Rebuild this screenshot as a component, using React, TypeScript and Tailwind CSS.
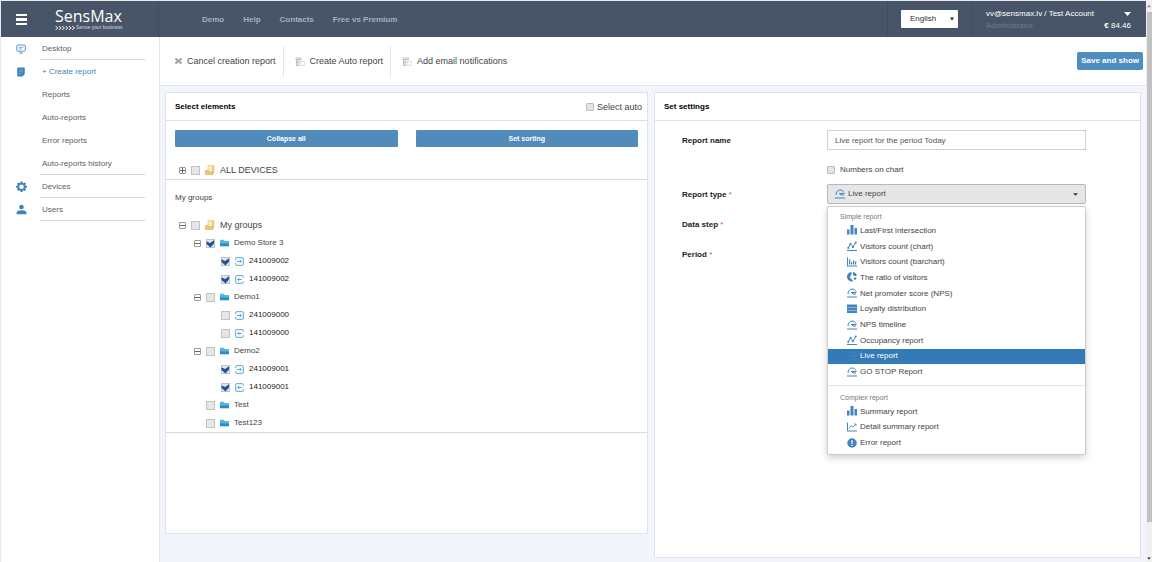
import React, { useState } from "react";

type IconProps = { className?: string };

const MonitorIcon = () => (
  <svg viewBox="0 0 20 20" className="size-[10px] text-[#5a9bd0]" fill="none" stroke="currentColor" strokeWidth="2">
    <rect x="1.5" y="2" width="17" height="12.5" rx="2" />
    <path d="M5 6.5h10M5 10h7M6 18.5h8M10 14.5v4" strokeWidth="1.6" />
  </svg>
);

const ReportIcon = () => (
  <svg viewBox="0 0 20 20" className="size-[10px] text-[#3f82bd]">
    <path d="M4 1h12a1.5 1.5 0 0 1 1.5 1.5V14l-4.5 5H4A1.5 1.5 0 0 1 2.500 17.500v-15A1.5 1.5 0 0 1 4 1z" fill="currentColor" />
    <path d="M6 6h8M6 9.500h8M6 13h5" stroke="#8dbbe0" strokeWidth="1.300" />
  </svg>
);

const GearIcon = () => (
  <svg viewBox="0 0 24 24" className="size-[11px] text-[#3f82bd]">
    <path
      fill="currentColor"
      fillRule="evenodd"
      d="M10 1h4l.6 3 1.900.8L19 3.100 21.900 6l-1.700 2.500.8 1.900 3 .6v3l-3 .6-.8 1.900 1.700 2.500-2.900 2.900-2.500-1.700-1.900.8-.6 3h-4l-.6-3-1.900-.8L5 21.900 2.100 19l1.700-2.500-.8-1.900-3-.6v-3l3-.6.8-1.900L2.100 6 5 3.100l2.500 1.700 1.900-.8zM12 7.500a5 5 0 1 0 0 10 5 5 0 0 0 0-10z"
    />
  </svg>
);

const UserIcon = () => (
  <svg viewBox="0 0 20 20" className="size-[11px] text-[#3f82bd]" fill="currentColor">
    <circle cx="10" cy="5.500" r="4.200" />
    <path d="M1 18.500v-2.500c0-3 4-4.500 9-4.500s9 1.500 9 4.500v2.500z" />
  </svg>
);

const BarsIcon = ({ className = "" }: IconProps) => (
  <svg viewBox="0 0 20 20" className={className} fill="currentColor">
    <path d="M0 9h5v10H0zM7 0h6v19H7zM15 6h5v13h-5z" />
  </svg>
);

const LineIcon = ({ className = "" }: IconProps) => (
  <svg viewBox="0 0 20 20" className={className} fill="none" stroke="currentColor" strokeWidth="2">
    <path d="M0 19h20" />
    <path d="M2 14 7 5.500l5 7L18 2" />
    <g fill="currentColor" stroke="none">
      <circle cx="2.500" cy="14" r="2" />
      <circle cx="7" cy="5.500" r="2" />
      <circle cx="12" cy="12.500" r="2" />
      <circle cx="17.500" cy="3" r="2" />
    </g>
  </svg>
);

const BarChartIcon = ({ className = "" }: IconProps) => (
  <svg viewBox="0 0 20 20" className={className} fill="currentColor">
    <path d="M0 1h2v16h18v2H0zM4 5h2.500v10H4zM8 10h2.500v5H8zM12 7h2.500v8H12zM16 9h2.500v6H16z" />
  </svg>
);

const DonutIcon = ({ className = "" }: IconProps) => (
  <svg viewBox="0 0 20 20" className={className} fill="currentColor">
    <path d="M9 0v6a4.200 4.200 0 0 0 0 8l3.500 4.500A9.500 9.500 0 1 1 9 0z" />
    <path d="M12 0a9 9 0 0 1 7.500 8h-5A4.500 4.500 0 0 0 12 6z" />
    <path d="M19 11a9 9 0 0 1-3 5.500L13 13l1.500-2z" />
  </svg>
);

const GaugeIcon = ({ className = "" }: IconProps) => (
  <svg viewBox="0 0 20 20" className={className} fill="none" stroke="currentColor" strokeWidth="2">
    <path d="M2 12C2 6 5.500 2 10 2c3.500 0 6.500 1.500 8 5M8 9h11M9 9l3 3h6M0 18h20" />
  </svg>
);

const ListIcon = ({ className = "" }: IconProps) => (
  <svg viewBox="0 0 20 20" className={className} fill="currentColor">
    <path d="M0 1h20v17H0z" />
    <path d="M1 7h18M1 13h18" stroke="#9fc3e2" strokeWidth="1.600" />
  </svg>
);

const AxisIcon = ({ className = "" }: IconProps) => (
  <svg viewBox="0 0 20 20" className={className} fill="none" stroke="currentColor" strokeWidth="2">
    <path d="M1 1v17h19" />
    <path d="M4.500 13 8 7l4 3 6-6M14 4h4v4" strokeWidth="1.600" />
  </svg>
);

const AlertIcon = ({ className = "" }: IconProps) => (
  <svg viewBox="0 0 20 20" className={className}>
    <circle cx="10" cy="10" r="9.500" fill="currentColor" />
    <path d="M10 4v7.500M10 13.500v2.500" stroke="#ffffff" strokeWidth="2.400" />
  </svg>
);

const GroupFolderIcon = () => (
  <svg viewBox="0 0 20 20" className="size-[10px] shrink-0">
    <path d="M6 1h12v15l-3 2H6z" fill="#f8ebbf" stroke="#dcbc70" />
    <path d="M14 1h4v15l-4 2z" fill="#eccb74" />
    <path d="M1 11h5l3 3h6v5H1z" fill="#edc96f" stroke="#c9a045" />
  </svg>
);

const FolderIcon = () => (
  <svg viewBox="0 0 20 16" className="h-[8px] w-[9px] shrink-0">
    <path d="M0 1h8l2 2.500h10V15H0z" fill="#55b6e2" />
    <path d="M0 9h20v6H0z" fill="#2a8dc4" />
  </svg>
);

const DoorIcon = ({ out }: { out: boolean }) => (
  <svg viewBox="0 0 20 20" className="size-[9px] shrink-0 text-[#3a96cc]" fill="none" stroke="currentColor" strokeWidth="1.900">
    {out ? (
      <path d="M18.500 6V3.500a2 2 0 0 0-2-2h-13a2 2 0 0 0-2 2v13a2 2 0 0 0 2 2h13a2 2 0 0 0 2-2V14M15 10H6M9.500 6.500 6 10l3.500 3.500" />
    ) : (
      <path d="M1.500 7V3.500a2 2 0 0 1 2-2h13a2 2 0 0 1 2 2v13a2 2 0 0 1-2 2h-13a2 2 0 0 1-2-2V13M4 10h10M10.500 6.500 14 10l-3.500 3.500" />
    )}
  </svg>
);

const DocIcon = () => (
  <svg viewBox="0 0 20 18" className="h-[9px] w-[10px] shrink-0" fill="none" stroke="#b0b0b0" strokeWidth="1.600">
    <path d="M1 2h13M1 5h13M4 8h6M4 11h5M4 14h5M3 5v12h6" />
    <rect x="11.500" y="9" width="7" height="7.500" stroke="#d4d4d4" />
  </svg>
);

function Check({
  checked = false,
  label,
  id,
  size = "large",
}: {
  checked?: boolean;
  label?: string;
  id?: string;
  size?: "large" | "small";
}) {
  const [on, setOn] = useState(checked);
  return (
    <span className="grid shrink-0 place-items-center">
      <input
        id={id}
        type="checkbox"
        aria-label={label}
        checked={on}
        onChange={() => setOn(!on)}
        className={
          size === "large"
            ? "col-start-1 row-start-1 size-[9px] appearance-none border border-[#c2c2c2] bg-[#e6e6e6]"
            : "col-start-1 row-start-1 size-[8px] appearance-none rounded-[1px] border border-[#bdbdbd] bg-[#e4e4e4]"
        }
      />
      {on && (
        <svg viewBox="0 0 18 18" className="pointer-events-none col-start-1 row-start-1 size-[9px]">
          <path d="M1 4.500 8 8l8-5.500V9l-7 8L1 10z" fill="#1c54a0" />
        </svg>
      )}
    </span>
  );
}

function Toggle({ open }: { open: boolean }) {
  return (
    <button
      type="button"
      aria-label={open ? "Collapse" : "Expand"}
      className="grid size-[7px] shrink-0 place-items-center rounded-[1px] border border-[#9a9a9a]"
    >
      <svg viewBox="0 0 5 5" className="size-[5px]" stroke="#666666" strokeWidth="1">
        <path d={open ? "M0 2.500h5" : "M0 2.500h5M2.500 0v5"} />
      </svg>
    </button>
  );
}

const navItems = [
  { text: "Desktop", icon: <MonitorIcon />, line: true },
  { text: "+ Create report", icon: <ReportIcon />, line: false, active: true },
  { text: "Reports", line: false },
  { text: "Auto-reports", line: false },
  { text: "Error reports", line: false },
  { text: "Auto-reports history", line: true },
  { text: "Devices", icon: <GearIcon />, line: true },
  { text: "Users", icon: <UserIcon />, line: true },
];

const groups = [
  { name: "Demo Store 3", checked: true, devices: ["241009002", "141009002"] },
  { name: "Demo1", checked: false, devices: ["241009000", "141009000"] },
  { name: "Demo2", checked: false, devices: ["241009001", "141009001"] },
  { name: "Test", checked: false, devices: [] },
  { name: "Test123", checked: false, devices: [] },
];

const simpleReports = [
  { text: "Last/First intersection", Icon: BarsIcon },
  { text: "Visitors count (chart)", Icon: LineIcon },
  { text: "Visitors count (barchart)", Icon: BarChartIcon },
  { text: "The ratio of visitors", Icon: DonutIcon },
  { text: "Net promoter score (NPS)", Icon: GaugeIcon },
  { text: "Loyalty distribution", Icon: ListIcon },
  { text: "NPS timeline", Icon: GaugeIcon },
  { text: "Occupancy report", Icon: LineIcon },
  { text: "Live report", Icon: GaugeIcon, selected: true },
  { text: "GO STOP Report", Icon: GaugeIcon },
];

const complexReports = [
  { text: "Summary report", Icon: BarsIcon },
  { text: "Detail summary report", Icon: AxisIcon },
  { text: "Error report", Icon: AlertIcon },
];

type Report = { text: string; Icon: (p: IconProps) => React.ReactElement; selected?: boolean };

function ReportOption({ text, Icon, selected }: Report) {
  return (
    <button
      type="button"
      role="option"
      aria-selected={!!selected}
      className={
        selected
          ? "flex items-center gap-[3px] bg-[#337ab7] pl-[19px] text-left text-white"
          : "flex items-center gap-[3px] pl-[19px] text-left text-[#444444]"
      }
    >
      <Icon className={selected ? "mb-px size-[10px] text-[#4384bd]" : "mb-px size-[10px] text-[#4585be]"} />
      {text}
    </button>
  );
}

function FieldLabel({ text, htmlFor, required }: { text: string; htmlFor: string; required?: boolean }) {
  return (
    <label htmlFor={htmlFor} className="pt-px font-bold text-[#222222]">
      {text}
      {required && <span className="font-normal text-[#e05050]"> *</span>}
    </label>
  );
}

function Header() {
  return (
    <header className="flex h-[36px] items-stretch bg-[#485568] text-white">
      <div className="flex w-[158px] shrink-0 items-center border-r border-[#414d5f] pl-[15px]">
        <button type="button" aria-label="Menu" className="flex w-[11px] flex-col gap-[2px]">
          <span className="h-[2px] bg-white" />
          <span className="h-[3px] bg-white" />
          <span className="h-[2px] bg-white" />
        </button>
        <a href="#" className="ml-[28px] flex flex-col">
          <span className="font-['Open_Sans','Noto_Sans',sans-serif] text-[16px] leading-[16px] font-medium">SensMax</span>
          <span className="flex items-center gap-px pt-px">
            <svg viewBox="0 0 42 8" className="h-[4px] w-[20px]" fill="none" stroke="white" strokeWidth="2">
              <path d="M1 0l5 4-5 4M8 0l5 4-5 4M15 0l5 4-5 4M22 0l5 4-5 4M29 0l5 4-5 4M36 0l5 4-5 4" />
            </svg>
            <span className="text-[5px] leading-[5px] text-[#d5dae1]">Sense your business</span>
          </span>
        </a>
      </div>
      <nav className="flex flex-1 items-center gap-[19px] pt-px pl-[43px] font-bold text-[#a5afbc]">
        <a href="#">Demo</a>
        <a href="#">Help</a>
        <a href="#">Contacts</a>
        <a href="#">Free vs Premium</a>
      </nav>
      <div className="flex items-center border-x border-[#414d5f] px-[13px]">
        <div className="grid items-center">
          <select
            aria-label="Language"
            className="col-start-1 row-start-1 h-[18px] w-[57px] appearance-none rounded-[1px] bg-white pl-[9px] text-[#333333]"
          >
            <option>English</option>
          </select>
          <svg viewBox="0 0 10 8" className="pointer-events-none col-start-1 row-start-1 mr-[4px] h-[4px] w-[4px] justify-self-end">
            <path d="M0 0h10L5 8z" fill="#222222" />
          </svg>
        </div>
      </div>
      <div className="flex w-[174px] flex-col justify-center gap-[2px] pt-px pr-[15px] pl-[14px] leading-[10px]">
        <div className="flex items-center justify-between">
          <span>vv@sensmax.lv / Test Account</span>
          <svg viewBox="0 0 12 7" className="h-[4px] w-[7px]">
            <path d="M0 0h12L6 7z" fill="white" />
          </svg>
        </div>
        <div className="flex justify-between">
          <span className="text-[#6c798b]">Administrator</span>
          <span>
            <b>€</b> 84.46
          </span>
        </div>
      </div>
    </header>
  );
}

export default function App() {
  return (
    <div className="flex min-h-screen bg-[#f0f0f0] font-['Liberation_Sans',Arial,sans-serif] text-[8px] leading-[12px] text-[#444444]">
      <div className="flex min-w-0 flex-1 flex-col border-t border-l border-[#e6ebf0] bg-[#f2f5fb]">
        <Header />
        <div className="flex flex-1">
          <aside className="w-[159px] shrink-0 border-r border-[#e3e6ec] bg-white">
            <nav className="flex flex-col">
              {navItems.map((item) => (
                <a key={item.text} href="#" className="flex h-[23px] pl-[15px]">
                  <span className="flex w-[24px] items-center">{item.icon}</span>
                  <span
                    className={
                      item.line
                        ? "mr-[14px] flex flex-1 items-center border-b border-[#d2d5d9] pt-px pl-[2px] text-[#606060]"
                        : item.active
                          ? "flex flex-1 items-center pl-[2px] text-[#4585b5]"
                          : "flex flex-1 items-center pl-[2px] text-[#606060]"
                    }
                  >
                    {item.text}
                  </span>
                </a>
              ))}
            </nav>
          </aside>

          <main className="flex min-w-0 flex-1 flex-col">
            <div className="flex h-[49px] items-center border-b border-[#dfe4ec] bg-white pr-[3px] pl-[15px] text-[9px]">
              <button type="button" className="flex h-[31px] items-center gap-[5px] border-r border-[#e4e4e4] pr-[7px]">
                <svg viewBox="0 0 14 12" className="h-[6px] w-[7px]" stroke="#a3a3a3" strokeWidth="4">
                  <path d="M1 1l12 10M13 1 1 11" />
                </svg>
                Cancel creation report
              </button>
              <button type="button" className="flex h-[31px] items-center gap-[5px] border-r border-[#e4e4e4] pr-[7px] pl-[11px]">
                <DocIcon />
                Create Auto report
              </button>
              <button type="button" className="flex h-[31px] items-center gap-[5px] pl-[11px]">
                <DocIcon />
                Add email notifications
              </button>
              <button type="button" className="ml-auto h-[18px] rounded-[2px] bg-[#4f8dbf] px-[4px] text-[8px] font-bold text-white">
                Save and show
              </button>
            </div>

            <div className="grid flex-1 grid-cols-[483fr_487fr] items-start gap-[6px] px-[5px] pt-[6px] pb-[3px]">
              <section className="min-h-[442px] min-w-0 border border-[#dde2ec] bg-white">
                <div className="flex h-[28px] items-center justify-between border-b border-[#dadfe8] pr-[5px] pl-[9px]">
                  <h2 className="font-bold text-black">Select elements</h2>
                  <span className="flex items-center gap-[3px] text-[9px]">
                    <Check id="auto" size="small" />
                    <label htmlFor="auto">Select auto</label>
                  </span>
                </div>
                <div className="grid grid-cols-2 gap-[18px] px-[9px] pt-[9px]">
                  <button type="button" className="h-[17px] rounded-[1px] bg-[#508bbb] text-[7px] font-bold text-white">
                    Collapse all
                  </button>
                  <button type="button" className="h-[17px] rounded-[1px] bg-[#508bbb] text-[7px] font-bold text-white">
                    Set sorting
                  </button>
                </div>
                <div className="mt-[14px] flex h-[19px] items-center gap-[5px] border-b border-[#d5dae2] pl-[13px] text-[9px]">
                  <Toggle open={false} />
                  <Check label="All devices" />
                  <GroupFolderIcon />
                  ALL DEVICES
                </div>
                <h3 className="pt-[12px] pl-[9px]">My groups</h3>
                <ul className="mt-[12px] border-b border-[#d5dae2]">
                  <li className="flex h-[18px] items-center gap-[5px] pl-[13px] text-[9px]">
                    <Toggle open />
                    <Check label="My groups" />
                    <GroupFolderIcon />
                    My groups
                  </li>
                  {groups.map((group) => (
                    <li key={group.name}>
                      <div
                        className={
                          group.devices.length
                            ? "flex h-[18px] items-center gap-[5px] pl-[28px]"
                            : "flex h-[18px] items-center gap-[5px] pl-[40px]"
                        }
                      >
                        {group.devices.length > 0 && <Toggle open />}
                        <span className="flex items-center gap-[5px]">
                          <Check checked={group.checked} label={group.name} />
                          <FolderIcon />
                          {group.name}
                        </span>
                      </div>
                      <ul>
                        {group.devices.map((device) => (
                          <li key={device} className="flex h-[18px] items-center gap-[5px] pl-[55px] text-[#222222]">
                            <Check checked={group.name !== "Demo1"} label={device} />
                            <DoorIcon out={device.startsWith("1")} />
                            {device}
                          </li>
                        ))}
                      </ul>
                    </li>
                  ))}
                </ul>
              </section>

              <section className="min-h-[466px] min-w-0 border border-[#dde2ec] bg-white">
                <div className="flex h-[28px] items-center border-b border-[#dadfe8] pl-[9px]">
                  <h2 className="font-bold text-black">Set settings</h2>
                </div>
                <form className="grid grid-cols-[145px_1fr] items-center gap-y-[10px] pt-[9px] pr-[54px] pl-[27px]">
                  <FieldLabel text="Report name" htmlFor="report-name" />
                  <input
                    id="report-name"
                    type="text"
                    defaultValue="Live report for the period Today"
                    className="h-[20px] min-w-0 border border-[#d0d0d0] px-[7px] text-[#555555]"
                  />
                  <div className="col-start-2 flex h-[14px] items-end gap-[5px]">
                    <Check id="numbers" size="small" />
                    <label htmlFor="numbers" className="leading-[9px]">
                      Numbers on chart
                    </label>
                  </div>
                  <FieldLabel text="Report type" htmlFor="report-type" required />
                  <div className="relative">
                    <button
                      id="report-type"
                      type="button"
                      aria-haspopup="listbox"
                      aria-expanded="true"
                      className="flex h-[20px] w-full items-center gap-[3px] rounded-[2px] border border-[#b8b8b8] bg-[#e6e6e6] px-[7px]"
                    >
                      <GaugeIcon className="size-[10px] text-[#4585be]" />
                      Live report
                      <svg viewBox="0 0 8 4" className="ml-auto h-[3px] w-[5px]">
                        <path d="M0 0h8L4 4z" fill="#333333" />
                      </svg>
                    </button>
                    <div
                      role="listbox"
                      aria-label="Report type"
                      className="absolute inset-x-0 top-full z-10 mt-[2px] rounded-[2px] border border-[#cccccc] bg-white pt-[3px] pb-[3px] shadow-[0_3px_7px_rgba(0,0,0,0.18)]"
                    >
                      <div className="pl-[12px] text-[7px] leading-[13px] text-[#777777]">Simple report</div>
                      <div className="grid h-[157px] auto-rows-fr">
                        {simpleReports.map((r) => (
                          <ReportOption key={r.text} {...r} />
                        ))}
                      </div>
                      <div className="mt-[5px] border-t border-[#e5e5e5] pt-[5px] pl-[12px] text-[7px] leading-[13px] text-[#777777]">
                        Complex report
                      </div>
                      <div className="grid h-[47px] auto-rows-fr">
                        {complexReports.map((r) => (
                          <ReportOption key={r.text} {...r} />
                        ))}
                      </div>
                    </div>
                  </div>
                  <FieldLabel text="Data step" htmlFor="data-step" required />
                  <select id="data-step" className="h-[20px] appearance-none rounded-[2px] border border-[#cccccc]" />
                  <FieldLabel text="Period" htmlFor="period" required />
                  <select id="period" className="h-[20px] appearance-none rounded-[2px] border border-[#cccccc]" />
                </form>
              </section>
            </div>
          </main>
        </div>
      </div>
      <div className="flex w-[6px] shrink-0 flex-col items-center bg-[#f0f0f0]" aria-hidden="true">
        <svg viewBox="0 0 6 4" className="my-[4px] h-[4px] w-[4px]">
          <path d="M0 4h6L3 0z" fill="#8a8a8a" />
        </svg>
        <div className="h-[510px] w-[5px] bg-[#c1c1c1]" />
        <svg viewBox="0 0 6 4" className="mt-auto mb-[2px] h-[3px] w-[4px]">
          <path d="M0 0h6L3 4z" fill="#505050" />
        </svg>
      </div>
    </div>
  );
}
